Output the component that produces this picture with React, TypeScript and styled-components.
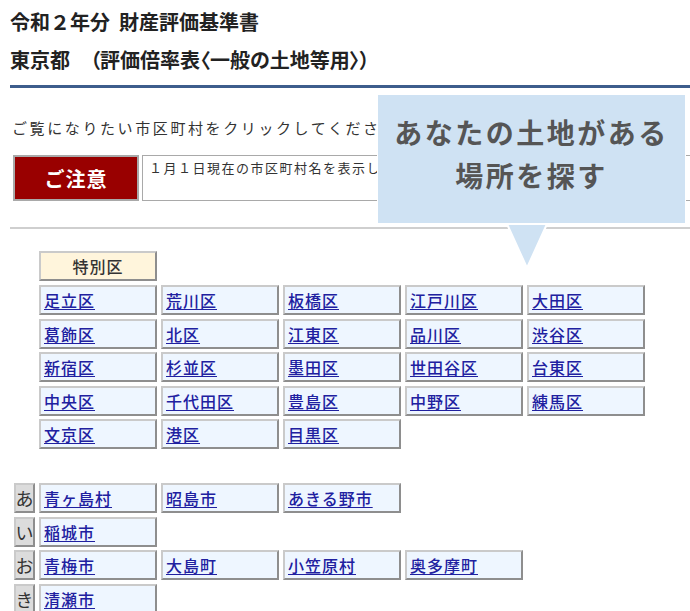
import React from 'react'
import styled, { createGlobalStyle } from 'styled-components'

const GlobalStyle = createGlobalStyle`
  html, body {
    margin: 0;
    padding: 0;
    background: #fff;
  }
  body {
    font-family: "Noto Sans CJK JP", "Noto Sans", sans-serif;
    color: #333;
    overflow: hidden;
  }
`

const specialWards = [
  '足立区', '荒川区', '板橋区', '江戸川区', '大田区',
  '葛飾区', '北区', '江東区', '品川区', '渋谷区',
  '新宿区', '杉並区', '墨田区', '世田谷区', '台東区',
  '中央区', '千代田区', '豊島区', '中野区', '練馬区',
  '文京区', '港区', '目黒区',
]

const kanaRows = [
  { kana: 'あ', towns: ['青ヶ島村', '昭島市', 'あきる野市'] },
  { kana: 'い', towns: ['稲城市'] },
  { kana: 'お', towns: ['青梅市', '大島町', '小笠原村', '奥多摩町'] },
  { kana: 'き', towns: ['清瀬市'] },
]

const App: React.FC = () => {
  return (
    <>
      <GlobalStyle />
      <Page>
        <Title>
          <TitleLine>令和２年分&nbsp;&nbsp;財産評価基準書</TitleLine>
          <TitleLine $tight>東京都　（評価倍率表〈一般の土地等用〉）</TitleLine>
        </Title>

        <Lead>ご覧になりたい市区町村をクリックしてください。</Lead>

        <Notice>
          <NoticeLabel>ご注意</NoticeLabel>
          <NoticeText>
            １月１日現在の市区町村名を表示していますので、ご注意ください。
          </NoticeText>
        </Notice>

        <Rule />

        <Section>
          <Grid>
            <Empty />
            <Heading>特別区</Heading>
          </Grid>
          <Grid>
            {specialWards.map((name, i) => (
              <React.Fragment key={name}>
                {i % 5 === 0 && <Empty />}
                <Cell>
                  <CellLink href="#">{name}</CellLink>
                </Cell>
              </React.Fragment>
            ))}
          </Grid>
        </Section>

        <Section>
          <Grid>
            {kanaRows.map((row) => (
              <React.Fragment key={row.kana}>
                <Kana>{row.kana}</Kana>
                {row.towns.map((t) => (
                  <Cell key={t}>
                    <CellLink href="#">{t}</CellLink>
                  </Cell>
                ))}
                {row.towns.length < 5 && <Filler style={{ gridColumn: `span ${5 - row.towns.length}` }} />}
              </React.Fragment>
            ))}
          </Grid>
        </Section>

        <Callout>
          <CalloutText>あなたの土地がある<br />場所を探す</CalloutText>
          <Pointer width="42" height="46" viewBox="0 0 42 46">
            <polygon points="1,1 41,1 21,45" fill="#cfe2f3" stroke="#fff" strokeWidth="2" />
          </Pointer>
        </Callout>
      </Page>
    </>
  )
}

const Page = styled.div`
  position: relative;
  width: 690px;
  height: 611px;
  overflow: hidden;
  padding-left: 10px;
  box-sizing: border-box;
`

const Title = styled.h1`
  margin: 0;
  padding-top: 3px;
  padding-bottom: 6px;
  width: 1000px;
  font-size: 20px;
  font-weight: 700;
  color: #222;
  border-bottom: 3px solid #3d5d8c;
`

const TitleLine = styled.div<{ $tight?: boolean }>`
  line-height: 38px;
  white-space: nowrap;
  font-feature-settings: ${(p) => (p.$tight ? '"palt"' : 'normal')};
`

const Lead = styled.p`
  margin: 30px 0 0 2px;
  font-size: 15px;
  letter-spacing: 2.6px;
  line-height: 20px;
  white-space: nowrap;
  color: #333;
`

const Notice = styled.div`
  display: flex;
  gap: 3px;
  margin: 17px 0 0 3px;
  width: 900px;
`

const NoticeLabel = styled.div`
  width: 122px;
  height: 42px;
  display: flex;
  align-items: center;
  justify-content: center;
  background: #990000;
  border: 2px solid #a9a9a9;
  color: #fff;
  font-size: 20px;
  font-weight: 700;
  letter-spacing: 1px;
`

const NoticeText = styled.div`
  flex: 1;
  border: 1px solid #a9a9a9;
  padding: 2px 6px;
  box-sizing: border-box;
  height: 46px;
  font-size: 13px;
  line-height: 19px;
  letter-spacing: 1.5px;
  color: #333;
`

const Rule = styled.hr`
  margin: 26px 0 0 0;
  width: 1000px;
  border: 0;
  border-top: 2px solid #cfcfcf;
`

const Section = styled.section`
  margin-top: 22px;
  & + & {
    margin-top: 34px;
  }
  display: flex;
  flex-direction: column;
  gap: 4px;
`

const Grid = styled.div`
  display: grid;
  grid-template-columns: 21px repeat(5, 118px);
  column-gap: 4px;
  row-gap: 3.5px;
  margin-left: 4px;
`

const Empty = styled.div``

const Filler = styled.div``

const boxBorder = `
  border-style: solid;
  border-width: 2px;
  border-color: #cacaca #8e8e8e #8e8e8e #cacaca;
  box-sizing: border-box;
  height: 30px;
`

const Heading = styled.div`
  ${boxBorder}
  background: #fff5dc;
  display: flex;
  align-items: center;
  justify-content: center;
  font-size: 16px;
  font-weight: 500;
  letter-spacing: 1px;
  color: #333;
`

const Cell = styled.div`
  ${boxBorder}
  background: #eef6ff;
  display: flex;
  align-items: center;
  padding-left: 3px;
`

const CellLink = styled.a`
  font-size: 16px;
  font-weight: 500;
  letter-spacing: 1px;
  color: #2020a0;
  text-decoration: underline;
  text-underline-offset: 2px;
  white-space: nowrap;
`

const Kana = styled.div`
  ${boxBorder}
  background: #dcdcdc;
  display: flex;
  align-items: center;
  justify-content: center;
  font-size: 18px;
  color: #333;
`

const Callout = styled.div`
  position: absolute;
  left: 377px;
  top: 94px;
  width: 309px;
  height: 130px;
  background: #cfe2f3;
  border: 1px solid #fff;
  box-sizing: border-box;
  padding-top: 16px;
`

const CalloutText = styled.div`
  text-align: center;
  font-size: 28px;
  font-weight: 700;
  line-height: 43px;
  letter-spacing: 2.5px;
  color: #555;
`

const Pointer = styled.svg`
  position: absolute;
  left: 128px;
  top: 128px;
  display: block;
`

export default App
